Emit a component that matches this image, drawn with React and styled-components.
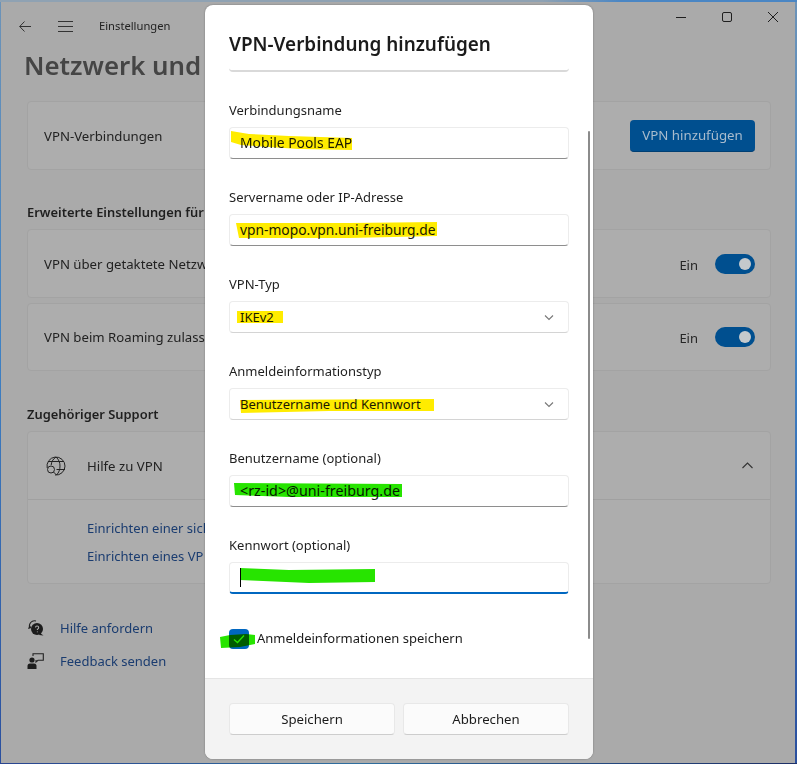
import styled, { createGlobalStyle } from "styled-components";

const GlobalStyle = createGlobalStyle`
  html, body {
    margin: 0;
    padding: 0;
  }
  body {
    font-family: "Noto Sans", "Open Sans", sans-serif;
    font-size: 13px;
    line-height: 20px;
    color: #1b1b1b;
  }
  * {
    box-sizing: border-box;
  }
`;

const Desktop = styled.div`
  position: relative;
  width: 797px;
  height: 764px;
  padding: 2px 2px 1px 1px;
  overflow: hidden;
  background:
    linear-gradient(90deg, #8fa2b3 0%, #8fa2b3 68%, #4a86c4 78%, #4a86c4 100%) top / 100% 2px no-repeat,
    linear-gradient(90deg, #2a4590 0%, #2f6f9e 45%, #2a5a8e 60%, #1d2f66 100%) bottom / 100% 1px no-repeat,
    linear-gradient(180deg, #6c93b8 0%, #3f82c4 45%, #2a4f9e 100%);
`;

const SettingsWindow = styled.div`
  height: 100%;
  background: #aaaaaa;
  overflow: hidden;
`;

const TitleBar = styled.header`
  display: flex;
  align-items: center;
  height: 43px;
  padding: 5px 0 0 18px;
`;

const TitleIcon = styled.svg`
  flex: none;
  margin-right: ${(p) => p.$gap}px;
`;

const AppName = styled.span`
  font-size: 11.2px;
  color: #222;
`;

const WindowControls = styled.div`
  display: flex;
  align-self: flex-start;
  margin: -5px -1px 0 auto;
`;

const WindowControl = styled.div`
  display: flex;
  align-items: center;
  justify-content: center;
  width: 46px;
  height: 30px;
`;

const Content = styled.main`
  padding: 0 24px 0 26px;
`;

const PageTitle = styled.h1`
  margin: 0 0 16px -3px;
  font-size: 25.8px;
  line-height: 40px;
  font-weight: 600;
  color: #454545;
  white-space: nowrap;
`;

const Card = styled.section`
  background: #adadad;
  border: 1px solid #a3a3a3;
  border-radius: 4px;
  margin-bottom: ${(p) => p.$after || 0}px;
`;

const CardRow = styled.div`
  display: flex;
  align-items: center;
  height: ${(p) => p.$height || 67}px;
  padding: 0 15px 0 16px;
`;

const RowText = styled.span`
  font-size: 13.2px;
  color: #222;
  white-space: nowrap;
`;

const RowEnd = styled.div`
  display: flex;
  align-items: center;
  margin-left: auto;
`;

const ChevronSlot = styled(RowEnd)`
  margin-right: 2px;
`;

const AccentButton = styled.div`
  display: flex;
  align-items: center;
  justify-content: center;
  width: 125px;
  height: 32px;
  font-size: 13.3px;
  background: #004f8f;
  border-bottom: 1px solid #003f73;
  border-radius: 4px;
  color: #a9bccd;
`;

const SectionHeading = styled.h2`
  margin: 0 0 7px;
  font-size: 12.9px;
  line-height: 20px;
  font-weight: 600;
  color: #1f1f1f;
  white-space: nowrap;
`;

const StateLabel = styled.span`
  margin-right: 17px;
  padding-top: 2px;
  color: #262626;
`;

const Toggle = styled.div`
  display: flex;
  align-items: center;
  justify-content: flex-end;
  width: 40px;
  height: 20px;
  padding-right: 4px;
  border-radius: 10px;
  background: #004f8f;
  &::after {
    content: "";
    width: 12px;
    height: 12px;
    border-radius: 50%;
    background: #c4c9cc;
  }
`;

const RowIcon = styled.svg`
  flex: none;
  margin: 0 21px 0 2px;
`;

const CardLinks = styled.div`
  display: flex;
  flex-direction: column;
  gap: 8px;
  height: 84px;
  padding: 18px 0 0 59px;
  border-top: 1px solid #a0a0a0;
`;

const Link = styled.span`
  color: #1a3c70;
  white-space: nowrap;
`;

const FooterLinks = styled.div`
  display: flex;
  flex-direction: column;
  gap: 13px;
`;

const FooterLink = styled.div`
  display: flex;
  align-items: center;
  gap: 16px;
`;

const Dialog = styled.div`
  position: absolute;
  left: 205px;
  top: 5px;
  display: flex;
  flex-direction: column;
  width: 388px;
  height: 754px;
  background: #fff;
  border-radius: 8px;
  overflow: hidden;
  box-shadow: 0 0 2px rgba(0, 0, 0, 0.35);
`;

const DialogTitle = styled.h3`
  margin: 0;
  padding: 25px 24px 0;
  font-size: 18.9px;
  line-height: 28px;
  font-weight: 600;
  color: #1b1b1b;
`;

const DialogBody = styled.div`
  flex: 1;
  display: flex;
  flex-direction: column;
  gap: 28px;
  padding: 0 24px;
  overflow: hidden;
`;

const ScrolledField = styled.div`
  flex: none;
  height: 14px;
  border-bottom: 2px solid #d9d9d9;
  border-radius: 0 0 4px 4px;
`;

const FieldGroup = styled.div`
  display: flex;
  flex-direction: column;
  gap: 7px;
`;

const FieldLabel = styled.label`
  color: #1f1f1f;
`;

const Field = styled.div`
  position: relative;
  display: flex;
  align-items: center;
  justify-content: space-between;
  height: 32px;
  padding: 0 14px 0 10px;
  background: #fff;
  border: 1px solid #ececec;
  border-bottom: ${(p) => (p.$focused ? "2px solid #0067c0" : p.$select ? "1px solid #d4d4d4" : "1px solid #8e8e8e")};
  border-radius: 4px;
  white-space: nowrap;
`;

const FieldValue = styled.span`
  font-size: ${(p) => p.$size || 13}px;
`;

const Marker = styled.svg`
  position: absolute;
  left: -1px;
  top: -1px;
  mix-blend-mode: multiply;
  pointer-events: none;
`;

const CheckMarker = styled(Marker)`
  left: -9px;
  top: 6px;
`;

const Caret = styled.span`
  position: absolute;
  left: 10px;
  top: 5px;
  width: 1px;
  height: 19px;
  background: #000;
`;

const CheckRow = styled.div`
  position: relative;
  display: flex;
  align-items: center;
  gap: 8px;
  margin-top: 6px;
`;

const CheckLabel = styled.span`
  padding-bottom: 2px;
`;

const CheckBox = styled.div`
  display: flex;
  align-items: center;
  justify-content: center;
  width: 20px;
  height: 20px;
  background: #0067c0;
  border-radius: 4px;
`;

const ScrollThumb = styled.div`
  position: absolute;
  left: 383px;
  top: 126px;
  width: 2px;
  height: 508px;
  background: #8b8b8b;
  border-radius: 1px;
`;

const DialogFooter = styled.footer`
  display: grid;
  grid-template-columns: 1fr 1fr;
  gap: 8px;
  height: 81px;
  padding: 24px 24px 0;
  background: #f3f3f3;
  border-top: 1px solid #e5e5e5;
`;

const FooterButton = styled.div`
  display: flex;
  align-items: center;
  justify-content: center;
  height: 32px;
  font-size: 13.2px;
  background: #fbfbfb;
  border: 1px solid #e8e8e8;
  border-bottom-color: #cdcdcd;
  border-radius: 4px;
`;

const YELLOW = "#ffec00";
const GREEN = "#27e400";

const fields = [
  {
    label: "Verbindungsname",
    value: "Mobile Pools EAP",
    size: 13.9,
    color: YELLOW,
    mark: "M2 4 L20 7 L60 9 L123 11 L123 23 L70 22 L12 18 L2 15 Z",
  },
  {
    label: "Servername oder IP-Adresse",
    value: "vpn-mopo.vpn.uni-freiburg.de",
    size: 13.8,
    color: YELLOW,
    mark: "M7 9 L120 9 L208 8 L208 22 L120 24 L10 24 Z",
  },
  {
    label: "VPN-Typ",
    value: "IKEv2",
    select: true,
    color: YELLOW,
    mark: "M8 10 L54 10 L54 22 L8 22 Z",
  },
  {
    label: "Anmeldeinformationstyp",
    value: "Benutzername und Kennwort",
    select: true,
    color: YELLOW,
    mark: "M11 12 L205 11 L205 23 L100 23 L12 25 Z",
  },
  {
    label: "Benutzername (optional)",
    value: "<rz-id>@uni-freiburg.de",
    size: 14.3,
    color: GREEN,
    mark: "M5 8 L173 9 L173 22 L60 22 L6 20 Z",
  },
  {
    label: "Kennwort (optional)",
    focused: true,
    color: GREEN,
    mark: "M11 6 L60 8 L146 7 L146 20 L80 21 L11 18 Z",
  },
];

function SelectChevron() {
  return (
    <svg width="10" height="7" viewBox="0 0 10 7" fill="none" stroke="#777" strokeWidth="1.1">
      <path d="M1 1.5 L5 5.5 L9 1.5" />
    </svg>
  );
}

function FormField({ field }) {
  return (
    <FieldGroup>
      <FieldLabel>{field.label}</FieldLabel>
      <Field $select={field.select} $focused={field.focused}>
        <FieldValue $size={field.size}>{field.value}</FieldValue>
        {field.select && <SelectChevron />}
        <Marker width="340" height="32" viewBox="0 0 340 32">
          <path d={field.mark} fill={field.color} />
        </Marker>
        {field.focused && <Caret />}
      </Field>
    </FieldGroup>
  );
}

/* page behind the dialog, its texts end where the dialog covers them */
function SettingsPage() {
  return (
    <SettingsWindow>
      <TitleBar>
        <TitleIcon $gap={27} width="12" height="11" viewBox="0 0 12 11" fill="none" stroke="#333" strokeWidth="1">
          <path d="M5.5 0.5 L0.7 5.5 L5.5 10.5 M0.7 5.5 H12" />
        </TitleIcon>
        <TitleIcon $gap={26} width="15" height="11" viewBox="0 0 15 11" fill="none" stroke="#333" strokeWidth="1">
          <path d="M0 0.5 H15 M0 5.5 H15 M0 10.5 H15" />
        </TitleIcon>
        <AppName>Einstellungen</AppName>
        <WindowControls>
          <WindowControl>
            <svg width="10" height="10" viewBox="0 0 10 10" stroke="#1f1f1f" strokeWidth="1">
              <path d="M0 5.5 H10" />
            </svg>
          </WindowControl>
          <WindowControl>
            <svg width="10" height="10" viewBox="0 0 10 10" fill="none" stroke="#1f1f1f" strokeWidth="1">
              <rect x="0.5" y="0.5" width="9" height="9" rx="1.5" />
            </svg>
          </WindowControl>
          <WindowControl>
            <svg width="10" height="10" viewBox="0 0 10 10" stroke="#1f1f1f" strokeWidth="1">
              <path d="M0 0 L10 10 M10 0 L0 10" />
            </svg>
          </WindowControl>
        </WindowControls>
      </TitleBar>
      <Content>
        <PageTitle>Netzwerk und</PageTitle>
        <Card $after={32}>
          <CardRow>
            <RowText>VPN-Verbindungen</RowText>
            <RowEnd>
              <AccentButton>VPN hinzufügen</AccentButton>
            </RowEnd>
          </CardRow>
        </Card>
        <SectionHeading>Erweiterte Einstellungen für</SectionHeading>
        <Card $after={5}>
          <CardRow>
            <RowText>VPN über getaktete Netzw</RowText>
            <RowEnd>
              <StateLabel>Ein</StateLabel>
              <Toggle />
            </RowEnd>
          </CardRow>
        </Card>
        <Card $after={33}>
          <CardRow $height={66}>
            <RowText>VPN beim Roaming zulass</RowText>
            <RowEnd>
              <StateLabel>Ein</StateLabel>
              <Toggle />
            </RowEnd>
          </CardRow>
        </Card>
        <SectionHeading>Zugehöriger Support</SectionHeading>
        <Card $after={34}>
          <CardRow>
            <RowIcon width="20" height="20" viewBox="0 0 20 20" fill="none" stroke="#222" strokeWidth="1">
              <path d="M1.2 12 A9 9 0 1 1 9 19 M2 5.5 H18 M10.5 13.5 H19 M10 1 C6.5 3.5 5.5 6 5.2 9 M10 1 C13 3.5 14 7 14 10 C14 13.5 13 16.5 10.5 19" />
              <circle cx="5" cy="13.5" r="3.5" />
              <path d="M7.5 16 L10.5 19" />
            </RowIcon>
            <RowText>Hilfe zu VPN</RowText>
            <ChevronSlot>
              <svg width="11" height="7" viewBox="0 0 11 7" fill="none" stroke="#333" strokeWidth="1.1">
                <path d="M0.5 6 L5.5 1 L10.5 6" />
              </svg>
            </ChevronSlot>
          </CardRow>
          <CardLinks>
            <Link>Einrichten einer sich</Link>
            <Link>Einrichten eines VP</Link>
          </CardLinks>
        </Card>
        <FooterLinks>
          <FooterLink>
            <svg width="17" height="18" viewBox="0 0 17 18">
              <path d="M3 9 A5 5 0 0 1 9 2" fill="none" stroke="#222" strokeWidth="1.1" />
              <path d="M2.5 6 L1 10 L4.5 9 Z" fill="#222" />
              <circle cx="10" cy="10" r="6" fill="#1c1c1c" />
              <path d="M13 14 L16.5 16.5 L12 16 Z" fill="#1c1c1c" />
              <path d="M8.5 8.6 A1.6 1.6 0 1 1 10.4 10.2 V11 M10.4 12.4 V13.2" fill="none" stroke="#aaa" strokeWidth="1.1" />
            </svg>
            <Link>Hilfe anfordern</Link>
          </FooterLink>
          <FooterLink>
            <svg width="17" height="16" viewBox="0 0 17 16">
              <circle cx="5" cy="7" r="2.6" fill="#1c1c1c" />
              <path d="M0.5 16 V13 Q0.5 10.5 3 10.5 H7 Q9.5 10.5 9.5 13 V16 Z" fill="#1c1c1c" />
              <path d="M6 3 V0.7 H16.3 V7.3 H11 L9 9 V7" fill="none" stroke="#222" strokeWidth="1.1" />
            </svg>
            <Link>Feedback senden</Link>
          </FooterLink>
        </FooterLinks>
      </Content>
    </SettingsWindow>
  );
}

function VpnDialog() {
  return (
    <Dialog>
      <DialogTitle>VPN-Verbindung hinzufügen</DialogTitle>
      <DialogBody>
        <ScrolledField />
        {fields.map(function(field) {
          return <FormField key={field.label} field={field} />;
        })}
        <CheckRow>
          <CheckBox>
            <svg width="12" height="10" viewBox="0 0 12 10" fill="none" stroke="#fff" strokeWidth="1.3">
              <path d="M1 5.5 L4.5 8.5 L11 1.5" />
            </svg>
          </CheckBox>
          <CheckLabel>Anmeldeinformationen speichern</CheckLabel>
          <CheckMarker width="36" height="14" viewBox="0 0 36 14">
            <path d="M0 3 L10 1 L26 0 L35 1 L35 10 L20 13 L1 14 Z" fill={GREEN} />
          </CheckMarker>
        </CheckRow>
      </DialogBody>
      <ScrollThumb />
      <DialogFooter>
        <FooterButton>Speichern</FooterButton>
        <FooterButton>Abbrechen</FooterButton>
      </DialogFooter>
    </Dialog>
  );
}

/* main page component */
export default function App() {
  return (
    <>
      <GlobalStyle />
      <Desktop>
        <SettingsPage />
        <VpnDialog />
      </Desktop>
    </>
  );
}
